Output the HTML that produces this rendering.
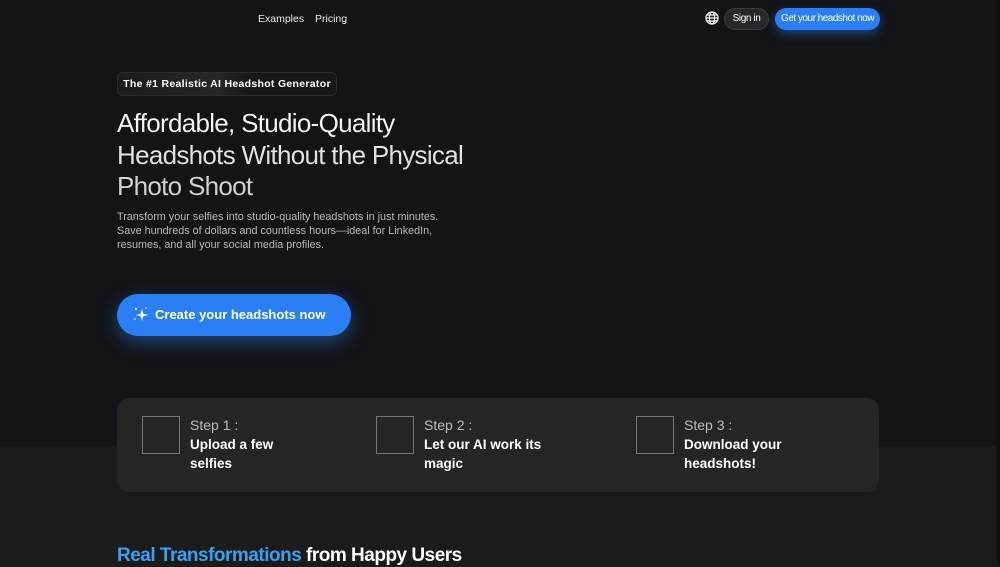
<!DOCTYPE html>
<html><head><meta charset="utf-8"><style>
*{margin:0;padding:0;box-sizing:border-box}
html,body{width:1000px;height:563px;overflow:hidden;background:#1b1b1b;font-family:"Liberation Sans",sans-serif;color:#fff}
.top{position:absolute;left:0;top:0;width:997px;height:446px;background:#131417}
.lower{position:absolute;left:0;top:446px;width:997px;height:117px;background:#1b1b1b}
.edge{position:absolute;left:997px;top:0;width:3px;height:563px;background:#0e0e0e}
.nav a{position:absolute;top:13px;font-size:10.5px;color:#e8e8e8}
.globe{position:absolute;left:705px;top:11px}
.signin{position:absolute;left:724px;top:8px;width:45px;height:22px;border-radius:11px;background:#26282b;border:1px solid #3a3c40;font-size:10px;text-align:center;line-height:20px;letter-spacing:-.4px}
.get{position:absolute;left:775px;top:8px;width:105px;height:22px;border-radius:11px;background:#2a7ff5;font-size:10px;text-align:center;line-height:22px;letter-spacing:-.5px;box-shadow:0 4px 10px rgba(42,127,245,.45)}
.badge{position:absolute;left:117px;top:72px;width:220px;height:24px;border:1px solid #2a2c30;border-radius:6px;background:linear-gradient(90deg,#1b1c1f,#26272a 45%,#17181b 60%);font-size:10.5px;font-weight:bold;text-align:center;line-height:22px;letter-spacing:.3px}
h1{position:absolute;left:117px;top:108px;font-size:26px;line-height:31.5px;font-weight:normal;letter-spacing:-.7px;width:380px;background:linear-gradient(#fff,#c8c8cc);-webkit-background-clip:text;color:transparent}
.p{position:absolute;left:117px;top:210px;font-size:10.8px;line-height:14.2px;color:#b8b8bb;width:326px}
.cta{position:absolute;left:117px;top:294px;width:234px;height:42px;border-radius:21px;background:#2a7ff5;box-shadow:0 6px 18px rgba(42,127,245,.45);font-size:13px;font-weight:bold;line-height:42px;padding-left:38px}
.cta svg{position:absolute;left:16px;top:12px}
.steps{position:absolute;left:117px;top:398px;width:762px;height:94px;border-radius:12px;background:#252525}
.img{position:absolute;top:18px;width:38px;height:38px;border:1px solid #777}
.st{position:absolute;top:18px;font-size:14px;color:#bbb;line-height:18px}
.st b{display:block;color:#fff;font-size:13.5px;line-height:19px;margin-top:1px}
.h2{position:absolute;left:117px;top:545px;font-size:19px;font-weight:bold;letter-spacing:-.5px}
.h2 span{color:#3aa0f0}
</style></head><body>
<div class="top"></div><div class="lower"></div><div class="edge"></div>
<div class="nav"><a style="left:258px">Examples</a><a style="left:315px">Pricing</a></div>
<svg class="globe" width="14" height="14" viewBox="0 0 14 14" fill="none" stroke="#fff" stroke-width="1.2"><circle cx="7" cy="7" r="6"/><ellipse cx="7" cy="7" rx="2.6" ry="6"/><path d="M1 7h12M2 4h10M2 10h10"/></svg>
<div class="signin">Sign in</div>
<div class="get">Get your headshot now</div>
<div class="badge">The #1 Realistic AI Headshot Generator</div>
<h1>Affordable, Studio-Quality Headshots Without the Physical Photo Shoot</h1>
<div class="p">Transform your selfies into studio-quality headshots in just minutes. Save hundreds of dollars and countless hours—ideal for LinkedIn, resumes, and all your social media profiles.</div>
<div class="cta"><svg width="16" height="16" viewBox="0 0 16 16" fill="#fff"><path d="M9 3 L10.3 7.7 15 9 10.3 10.3 9 15 7.7 10.3 3 9 7.7 7.7Z"/><circle cx="3" cy="3" r="1"/><circle cx="2" cy="13" r=".8"/><circle cx="13" cy="2" r=".8"/></svg>Create your headshots now</div>
<div class="steps">
<div class="img" style="left:25px"></div><div class="st" style="left:73px">Step 1 :<b>Upload a few<br>selfies</b></div>
<div class="img" style="left:259px"></div><div class="st" style="left:307px">Step 2 :<b>Let our AI work its<br>magic</b></div>
<div class="img" style="left:519px"></div><div class="st" style="left:567px">Step 3 :<b>Download your<br>headshots!</b></div>
</div>
<div class="h2"><span>Real Transformations</span> from Happy Users</div>
</body></html>
